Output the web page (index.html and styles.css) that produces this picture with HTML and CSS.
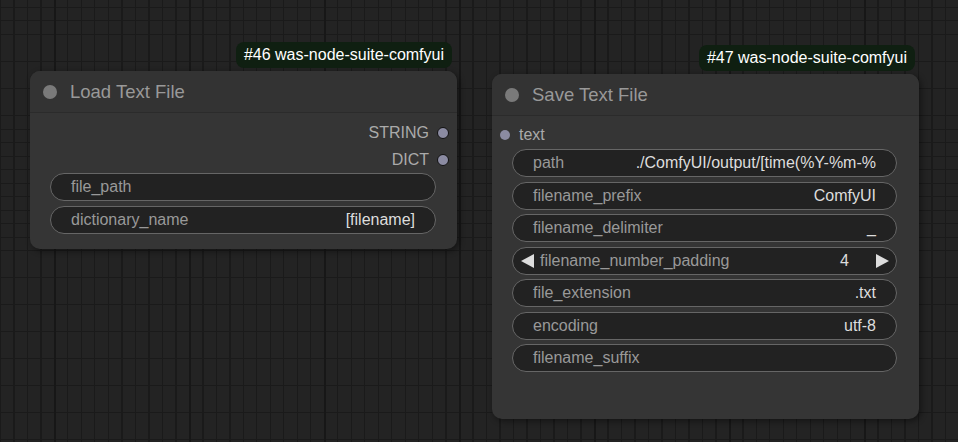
FILE: index.html
```html
<!DOCTYPE html>
<html lang="en">
<head>
    <meta charset="UTF-8">
    <title>ComfyUI - Text File Nodes</title>
    <link rel="stylesheet" href="styles.css">
</head>
<body>
    <div class="canvas">
        <!-- node #46 -->
        <div class="node node-load">
            <div class="badge">#46 was-node-suite-comfyui</div>
            <div class="node-title">
                <span class="title-dot"></span>
                <span class="title-text">Load Text File</span>
            </div>
            <div class="node-body">
                <div class="slot slot-out">
                    <span>STRING</span>
                    <span class="slot-dot ring"></span>
                </div>
                <div class="slot slot-out">
                    <span>DICT</span>
                    <span class="slot-dot ring"></span>
                </div>
                <div class="widgets">
                    <div class="widget"><span class="w-label">file_path</span></div>
                    <div class="widget"><span class="w-label">dictionary_name</span><span class="w-value">[filename]</span></div>
                </div>
            </div>
        </div>

        <!-- node #47 -->
        <div class="node node-save">
            <div class="badge">#47 was-node-suite-comfyui</div>
            <div class="node-title">
                <span class="title-dot"></span>
                <span class="title-text">Save Text File</span>
            </div>
            <div class="node-body">
                <div class="slot slot-in">
                    <span class="slot-dot"></span>
                    <span>text</span>
                </div>
                <div class="widgets">
                    <div class="widget"><span class="w-label">path</span><span class="w-value">./ComfyUI/output/[time(%Y-%m-%</span></div>
                    <div class="widget"><span class="w-label">filename_prefix</span><span class="w-value">ComfyUI</span></div>
                    <div class="widget"><span class="w-label">filename_delimiter</span><span class="w-value">_</span></div>
                    <div class="widget number">
                        <span class="arrow left"></span>
                        <span class="w-label">filename_number_padding</span>
                        <span class="w-value">4</span>
                        <span class="arrow right"></span>
                    </div>
                    <div class="widget"><span class="w-label">file_extension</span><span class="w-value">.txt</span></div>
                    <div class="widget"><span class="w-label">encoding</span><span class="w-value">utf-8</span></div>
                    <div class="widget"><span class="w-label">filename_suffix</span></div>
                </div>
            </div>
        </div>
    </div>
</body>
</html>
```

FILE: styles.css
```css
body {
    margin: 0;
    font-family: 'Liberation Sans', Arial, sans-serif;
    background-color: #222;
    overflow: hidden;
}

.canvas {
    position: relative;
    width: 958px;
    height: 442px;
    background-color: #232323;
    background-image:
        repeating-linear-gradient(90deg, transparent 0 54px, #171717 54px 56px, transparent 56px 135px),
        repeating-linear-gradient(90deg, #1a1a1a 0 1px, transparent 1px 13.5px),
        repeating-linear-gradient(180deg, transparent 0 7px, #1a1a1a 7px 8px, transparent 8px 13.5px);
}

.node {
    position: absolute;
    width: 427px;
    background: #353535;
    border-radius: 10px;
    box-shadow: 2px 2px 6px rgba(0, 0, 0, 0.45);
}

.node-load {
    left: 30px;
    top: 71px;
    height: 178px;
}

.node-save {
    left: 492px;
    top: 74px;
    height: 345px;
}

.badge {
    position: absolute;
    right: 5px;
    bottom: calc(100% + 3px);
    height: 26px;
    line-height: 26px;
    padding: 0 8px;
    background: #0f1f11;
    border-radius: 8px;
    color: #fff;
    font-size: 16px;
    white-space: nowrap;
}

.node-save .badge {
    right: 4px;
}

.node-title {
    display: flex;
    align-items: center;
    height: 41px;
    padding-left: 13px;
    background: #333;
    border-bottom: 1px solid #2b2b2b;
    border-radius: 10px 10px 0 0;
}

.title-dot {
    width: 14px;
    height: 14px;
    border-radius: 50%;
    background: #7a7a7a;
}

.title-text {
    margin-left: 13px;
    color: #999;
    font-size: 18.5px;
}

.node-body {
    padding-top: 5px;
}

.node-load .node-body {
    padding-top: 6px;
}

.slot {
    display: flex;
    align-items: center;
    height: 27px;
    font-size: 16px;
    color: #aaa;
}

.slot-out {
    justify-content: flex-end;
    padding-right: 8px;
    gap: 8px;
}

.slot-in {
    padding-left: 8px;
    gap: 9px;
}

.slot-dot {
    width: 10px;
    height: 10px;
    border-radius: 50%;
    background: #8b8ba2;
}

.slot-dot.ring {
    width: 10px;
    height: 10px;
    border: 1px solid #111;
}

.widgets {
    display: flex;
    flex-direction: column;
    gap: 5px;
    margin: 1px 0 0 20px;
    width: 386px;
}

.node-load .widgets {
    margin-top: 0;
}

.node-save .widgets {
    gap: 4.5px;
    width: 385px;
}

.widget {
    display: flex;
    align-items: center;
    justify-content: space-between;
    box-sizing: border-box;
    height: 28px;
    padding: 0 20px;
    background: #222;
    border: 1px solid #666;
    border-radius: 14px;
    font-size: 16px;
    white-space: nowrap;
}

.w-label {
    color: #999;
}

.w-value {
    color: #ddd;
}

.widget.number {
    justify-content: flex-start;
    padding: 0 7px 0 8px;
}

.widget.number .w-label {
    margin-left: 6px;
    flex: 1;
}

.widget.number .w-value {
    margin-right: 27px;
}

.arrow {
    width: 0;
    height: 0;
    border-top: 7px solid transparent;
    border-bottom: 7px solid transparent;
}

.arrow.left {
    border-right: 13px solid #ddd;
}

.arrow.right {
    border-left: 13px solid #ddd;
}
```
